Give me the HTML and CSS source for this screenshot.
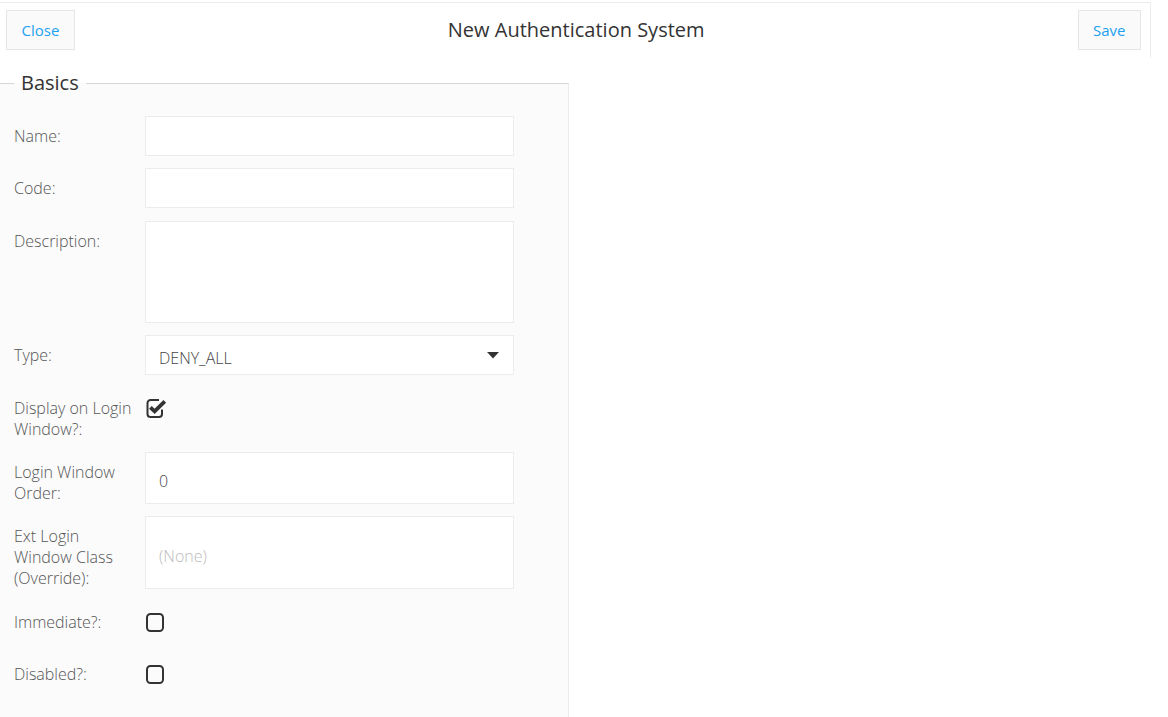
FILE: index.html
```html
<!DOCTYPE html>
<html lang="en">
<head>
<meta charset="utf-8">
<title>New Authentication System</title>
<link rel="stylesheet" href="styles.css">
</head>
<body>
<div class="header">
  <button class="btn" type="button">Close</button>
  <div class="title">New Authentication System</div>
  <button class="btn" type="button">Save</button>
</div>
<fieldset class="section">
  <legend class="legend">Basics</legend>
  <div class="form">
    <div class="row">
      <label class="label">Name:</label>
      <input class="field" type="text">
    </div>
    <div class="row">
      <label class="label">Code:</label>
      <input class="field" type="text">
    </div>
    <div class="row">
      <label class="label">Description:</label>
      <textarea class="field area"></textarea>
    </div>
    <div class="row">
      <label class="label">Type:</label>
      <div class="field select">
        <span class="select-value">DENY_ALL</span>
        <svg class="caret" width="12" height="7" viewBox="0 0 12 7"><path d="M0 0 H12 L6 6.5 Z" fill="#333"/></svg>
      </div>
    </div>
    <div class="row">
      <label class="label">Display on Login Window?:</label>
      <div class="check-cell">
        <svg class="check on" width="22" height="21" viewBox="0 0 22 21">
          <path d="M13 2 H4.5 A3 3 0 0 0 1.5 5 V16 A3 3 0 0 0 4.5 19 H13 A3 3 0 0 0 16 16 V11.5" fill="none" stroke="#333" stroke-width="2"/>
          <path d="M4.4 9.4 L8.6 13.4 L18.8 3.4" fill="none" stroke="#333" stroke-width="3.8" stroke-linejoin="miter"/>
        </svg>
      </div>
    </div>
    <div class="row">
      <label class="label">Login Window Order:</label>
      <input class="field" type="text" value="0">
    </div>
    <div class="row">
      <label class="label">Ext Login Window Class (Override):</label>
      <input class="field" type="text" placeholder="(None)">
    </div>
    <div class="row">
      <label class="label">Immediate?:</label>
      <div class="check-cell">
        <svg class="check off" width="18" height="19" viewBox="0 0 18 19"><rect x="1" y="1" width="16" height="17" rx="3.5" fill="none" stroke="#333" stroke-width="2"/></svg>
      </div>
    </div>
    <div class="row">
      <label class="label">Disabled?:</label>
      <div class="check-cell">
        <svg class="check off" width="18" height="19" viewBox="0 0 18 19"><rect x="1" y="1" width="16" height="17" rx="3.5" fill="none" stroke="#333" stroke-width="2"/></svg>
      </div>
    </div>
  </div>
</fieldset>
</body>
</html>
```
FILE: styles.css
```css
* { box-sizing: border-box; }

html, body {
  margin: 0;
  background: #ffffff;
  font-family: "Open Sans", "Liberation Sans", sans-serif;
}

.header {
  margin-top: 2px;
  width: 1151px;
  height: 56px;
  border-top: 1px solid #ececec;
  border-right: 1px solid #ececec;
  display: flex;
  align-items: flex-start;
  padding: 7px 9px 0 6px;
}

.btn {
  height: 40px;
  padding: 0 14.5px;
  background: #fafafa;
  border: 1px solid #e6e6e6;
  border-radius: 0;
  color: #1ba1f0;
  font-family: "Open Sans", "Liberation Sans", sans-serif;
  font-size: 15px;
  line-height: 20px;
}

.title {
  flex: 1;
  text-align: center;
  font-size: 20px;
  line-height: 40px;
  color: #333;
}

.section {
  margin: 12px 0 0 0;
  width: 569px;
  min-width: 0;
  min-height: 660px;
  padding: 20px 0 30px 14px;
  border: none;
  border-top: 1px solid #d6d6d6;
  border-right: 1px solid #ececec;
  background: #fbfbfb;
}

.legend {
  padding: 0 7px;
  font-size: 20px;
  line-height: 26px;
  color: #333;
}

.form {
  display: flex;
  flex-direction: column;
  gap: 12.4px;
}

.row {
  display: flex;
  align-items: stretch;
}

.label {
  width: 131px;
  padding: 10px 8px 0 0;
  font-size: 16px;
  line-height: 21px;
  font-weight: 300;
  color: #555;
}

.field {
  width: 369px;
  min-height: 40px;
  margin: 0;
  padding: 6px 13px 0 13px;
  background: #fff;
  border: 1px solid #ececec;
  border-radius: 0;
  outline: none;
  font-family: "Open Sans", "Liberation Sans", sans-serif;
  font-size: 16px;
  font-weight: 300;
  color: #444;
}

.field::placeholder {
  color: #bbb;
}

.area {
  height: 102px;
  resize: none;
}

.select {
  display: flex;
  align-items: center;
  justify-content: space-between;
  padding: 6px 14px 0 13px;
}

.caret {
  margin-top: -6px;
  display: block;
}

.check-cell {
  min-height: 40px;
  padding: 10px 0 0 1px;
}

.check {
  display: block;
}

.check.off {
  margin-top: 1px;
}
```
